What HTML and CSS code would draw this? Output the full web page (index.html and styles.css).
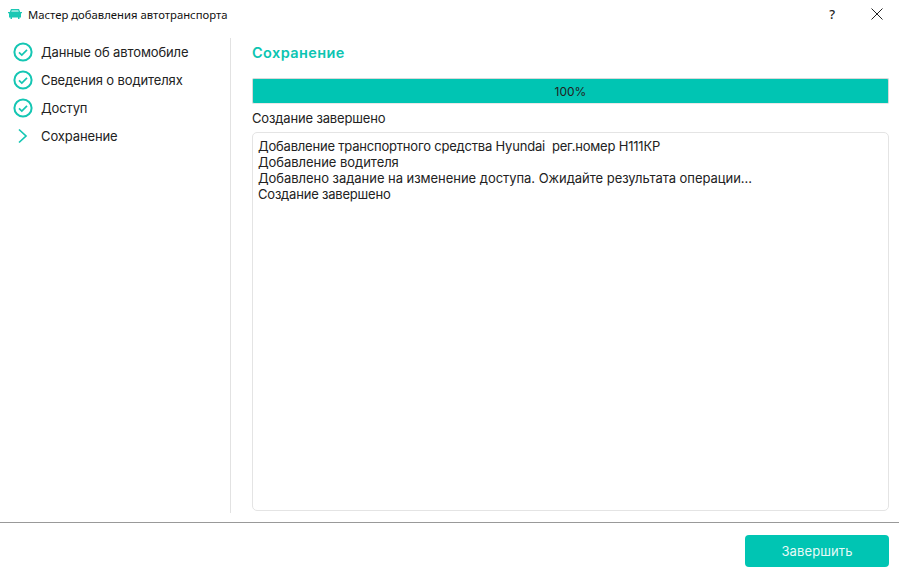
FILE: index.html
```html
<!DOCTYPE html>
<html lang="ru">
<head>
<meta charset="utf-8">
<title>Мастер добавления автотранспорта</title>
<link rel="stylesheet" href="styles.css">
</head>
<body>
<div class="window">
  <header class="titlebar">
    <svg class="app-icon" viewBox="0 0 14 10" width="14" height="10"><path fill="#1cc8b4" d="M3 0h8l1.200 3H14v1.200h-1V8.500h-1.500V10H10V8.500H4V10H2.500V8.500H1V4.200H0V3h1.800z"/><path fill="#8fe6dc" d="M3.800 1h6.400l.6 2H3.200z"/></svg>
    <span class="title">Мастер добавления автотранспорта</span>
    <span class="help">?</span>
    <svg class="close" viewBox="0 0 12 12" width="12" height="12"><path d="M.5.500l11 11M11.500.500l-11 11" stroke="#222" stroke-width="1" fill="none"/></svg>
  </header>
  <div class="main">
    <nav class="steps">
      <div class="step"><svg class="step-icon" viewBox="0 0 20 20" width="20" height="20"><circle cx="10" cy="10" r="8.600" fill="none" stroke="#14c6b3" stroke-width="2"/><path d="M6 10.300l2.800 2.700L14 7.800" fill="none" stroke="#14c6b3" stroke-width="1.700"/></svg><span>Данные об автомобиле</span></div>
      <div class="step"><svg class="step-icon" viewBox="0 0 20 20" width="20" height="20"><circle cx="10" cy="10" r="8.600" fill="none" stroke="#14c6b3" stroke-width="2"/><path d="M6 10.300l2.800 2.700L14 7.800" fill="none" stroke="#14c6b3" stroke-width="1.700"/></svg><span>Сведения о водителях</span></div>
      <div class="step"><svg class="step-icon" viewBox="0 0 20 20" width="20" height="20"><circle cx="10" cy="10" r="8.600" fill="none" stroke="#14c6b3" stroke-width="2"/><path d="M6 10.300l2.800 2.700L14 7.800" fill="none" stroke="#14c6b3" stroke-width="1.700"/></svg><span>Доступ</span></div>
      <div class="step"><svg class="step-icon" viewBox="0 0 20 20" width="20" height="20"><path d="M6 3.500l7 6.500-7 6.500" fill="none" stroke="#14c6b3" stroke-width="1.700"/></svg><span>Сохранение</span></div>
    </nav>
    <section class="content">
      <h1 class="heading">Сохранение</h1>
      <div class="progress">100%</div>
      <div class="status">Создание завершено</div>
      <div class="log">
        <div class="tight">Добавление транспортного средства Hyundai&nbsp; рег.номер Н111КР</div>
        <div>Добавление водителя</div>
        <div>Добавлено задание на изменение доступа. Ожидайте результата операции...</div>
        <div class="tight">Создание завершено</div>
      </div>
    </section>
  </div>
  <footer class="footer">
    <button class="finish">Завершить</button>
  </footer>
</div>
</body>
</html>
```

FILE: styles.css
```css
* { box-sizing: border-box; }
html, body { margin: 0; height: 100%; background: #fff; }
body { font-family: "Inter", "Noto Sans CJK SC", sans-serif; color: #222; font-size: 13px; }
.window { width: 899px; height: 576px; display: flex; flex-direction: column; overflow: hidden; }
.titlebar { height: 29px; flex: none; display: flex; align-items: center; padding: 0 16px 1px 8px; }
.app-icon { flex: none; }
.title { font-family: "Noto Sans", sans-serif; font-size: 11.3px; margin-left: 6px; color: #111; }
.help { margin-left: auto; font-family: "Noto Sans", sans-serif; font-size: 13px; margin-right: 36px; color: #222; font-weight: 500; }
.close { flex: none; }
.main { flex: 1; min-height: 0; display: flex; padding: 9px 10px 9px 0; }
.steps { width: 231px; flex: none; border-right: 1px solid #e2e2e2; }
.step { height: 28px; display: flex; align-items: center; padding-left: 13px; gap: 8px; letter-spacing: -.12px; }
.step-icon { flex: none; }
.content { flex: 1; min-width: 0; padding-left: 21px; display: flex; flex-direction: column; }
.heading { margin: 5px 0 0; height: 35px; font-size: 14.5px; line-height: 20px; font-weight: 600; color: #0cc5b2; letter-spacing: .4px; }
.progress { height: 26px; background: #00c5b3; border: 1px solid #d8d8d8; border-bottom-color: #e8e8e8; border-radius: 2px; display: flex; align-items: center; justify-content: center; font-size: 12px; }
.status { height: 28px; line-height: 29px; letter-spacing: -.15px; }
.log { flex: 1; margin-bottom: 2px; border: 1px solid #e4e4e4; border-radius: 5px; padding: 5px; line-height: 16px; letter-spacing: -.04px; }
.tight { letter-spacing: -.2px; }
.footer { height: 54px; flex: none; border-top: 1px solid #999; display: flex; justify-content: flex-end; align-items: flex-start; padding: 12px 10px 0 0; }
.finish { width: 144px; height: 32px; background: #00c5b3; border: 0; border-radius: 4px; color: #e6faf7; font: 13px "Inter", sans-serif; letter-spacing: .1px; }
```
